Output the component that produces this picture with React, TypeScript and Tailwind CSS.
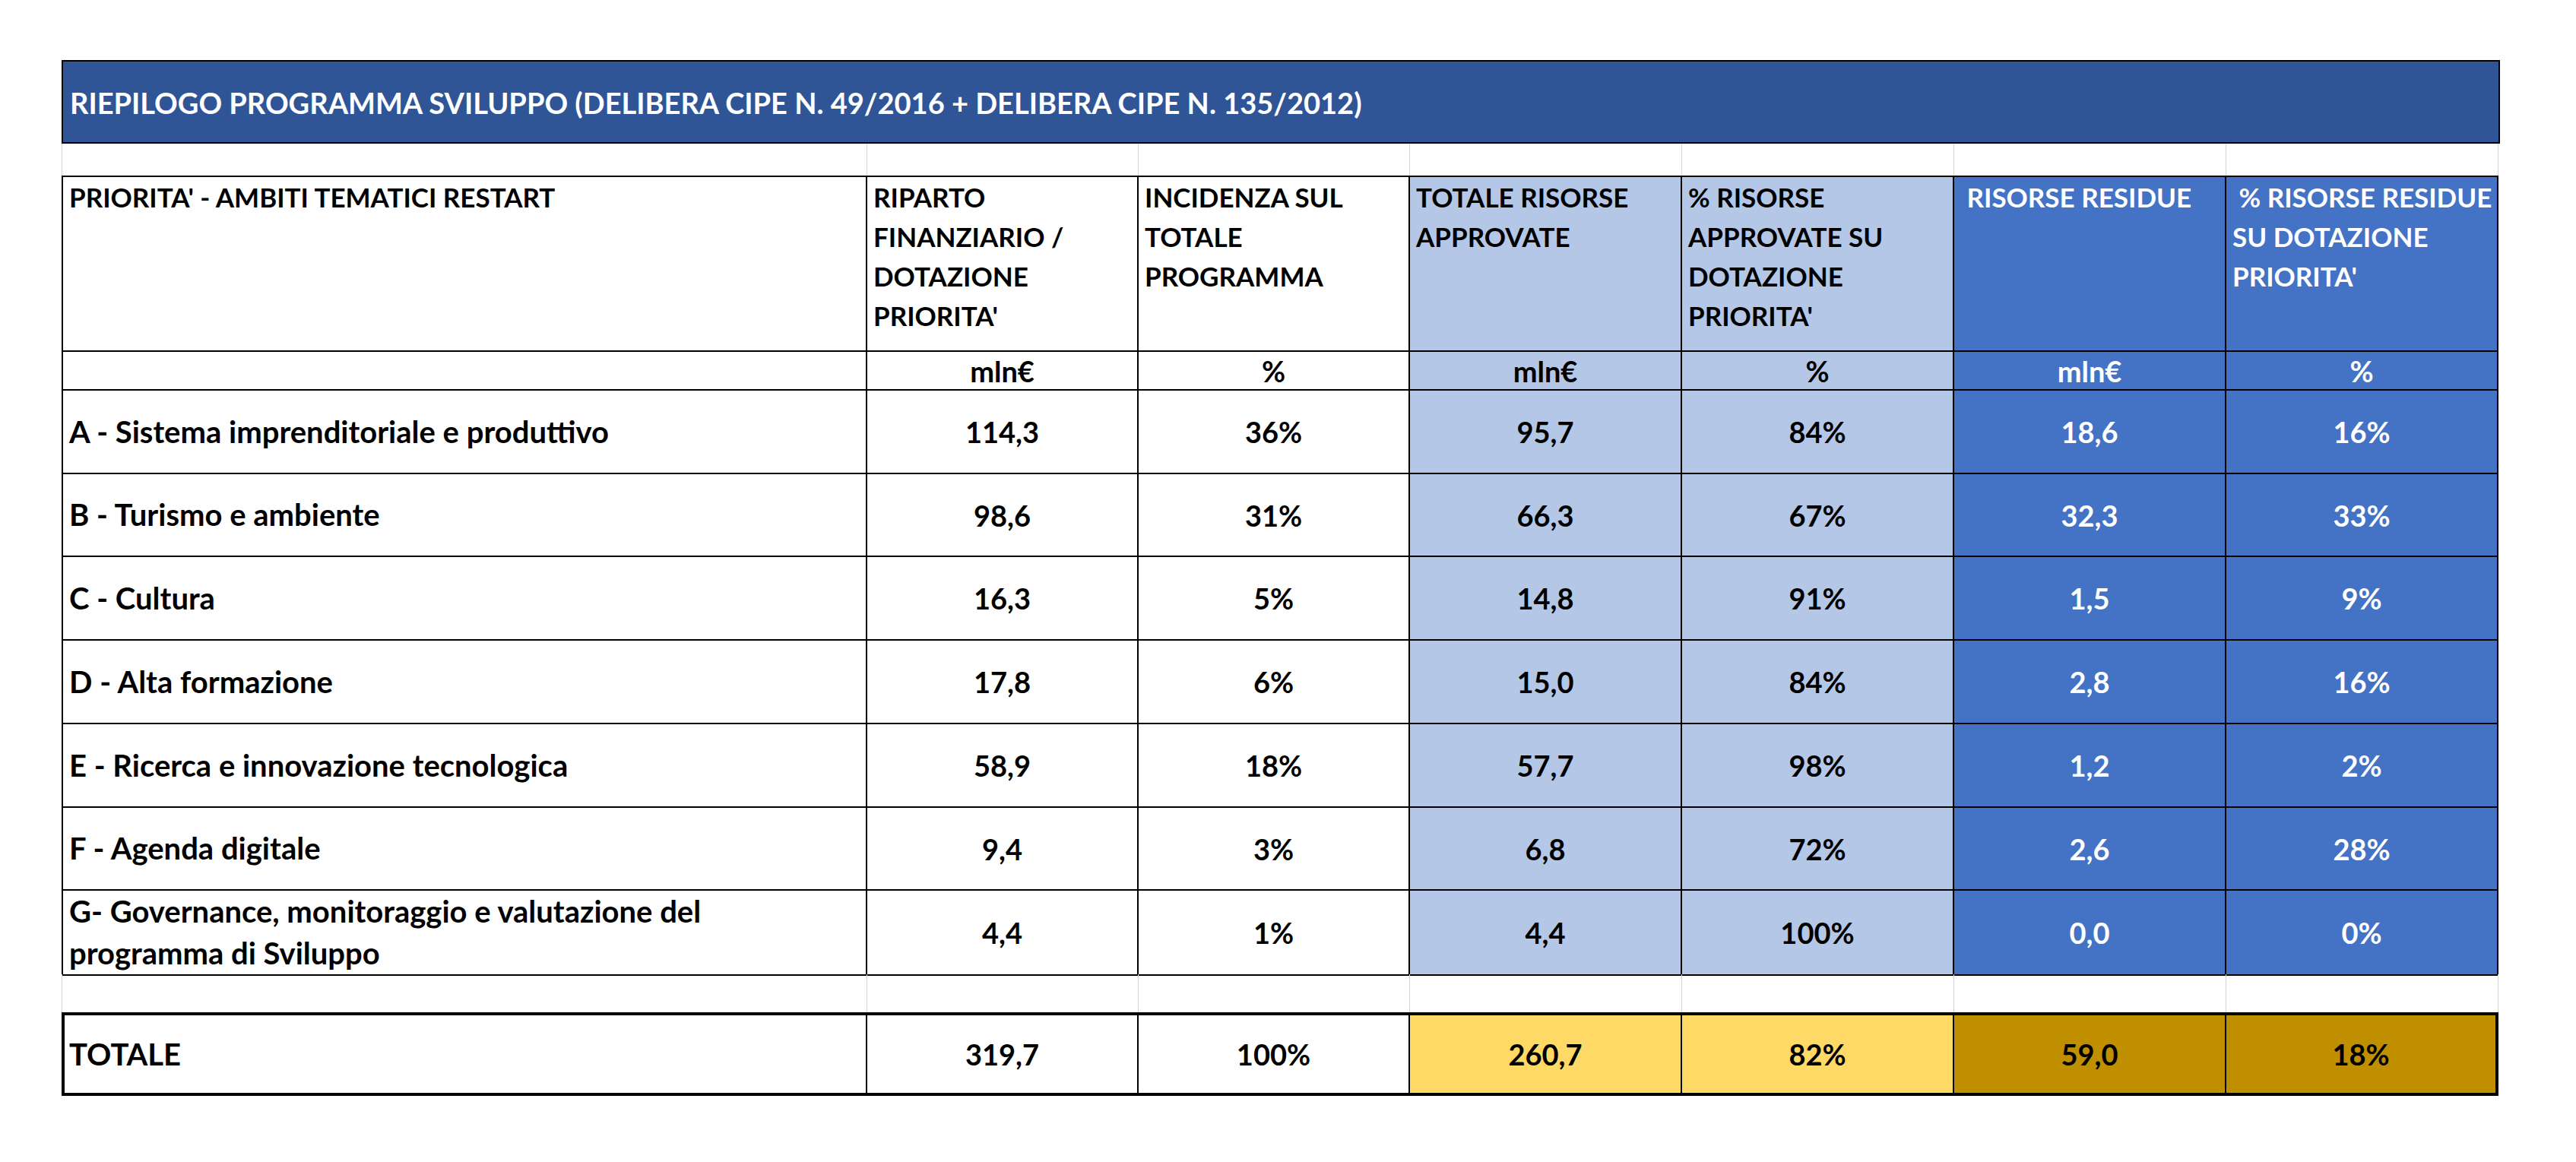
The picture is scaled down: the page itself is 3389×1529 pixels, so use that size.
import React from "react";

const grid = "grid grid-cols-[1060px_357px_357px_358px_358px_358px_358px]";

// per-column cell fill for the header / unit / data rows
const fills = [
  "bg-white text-black",
  "bg-white text-black",
  "bg-white text-black",
  "bg-[#B4C7E7] text-black",
  "bg-[#B4C7E7] text-black",
  "bg-[#4472C4] text-white",
  "bg-[#4472C4] text-white",
];

const totalFills = [
  "bg-white",
  "bg-white",
  "bg-white",
  "bg-[#FFD966]",
  "bg-[#FFD966]",
  "bg-[#BF8F00]",
  "bg-[#BF8F00]",
];

const headers: React.ReactNode[] = [
  <>PRIORITA' - AMBITI TEMATICI RESTART</>,
  <>RIPARTO<br />FINANZIARIO /<br />DOTAZIONE<br />PRIORITA'</>,
  <>INCIDENZA SUL<br />TOTALE<br />PROGRAMMA</>,
  <>TOTALE RISORSE<br />APPROVATE</>,
  <>% RISORSE<br />APPROVATE SU<br />DOTAZIONE<br />PRIORITA'</>,
  <>&nbsp;RISORSE RESIDUE</>,
  <>&nbsp;% RISORSE RESIDUE<br />SU DOTAZIONE<br />PRIORITA'</>,
];

const units = ["", "mln€", "%", "mln€", "%", "mln€", "%"];

const rows = [
  { h: "h-[110px]", cells: ["A - Sistema imprenditoriale e produttivo", "114,3", "36%", "95,7", "84%", "18,6", "16%"] },
  { h: "h-[109px]", cells: ["B - Turismo e ambiente", "98,6", "31%", "66,3", "67%", "32,3", "33%"] },
  { h: "h-[110px]", cells: ["C - Cultura", "16,3", "5%", "14,8", "91%", "1,5", "9%"] },
  { h: "h-[110px]", cells: ["D - Alta formazione", "17,8", "6%", "15,0", "84%", "2,8", "16%"] },
  { h: "h-[110px]", cells: ["E - Ricerca e innovazione tecnologica", "58,9", "18%", "57,7", "98%", "1,2", "2%"] },
  { h: "h-[109px]", cells: ["F - Agenda digitale", "9,4", "3%", "6,8", "72%", "2,6", "28%"] },
  { h: "h-[110px]", cells: ["G- Governance, monitoraggio e valutazione del programma di Sviluppo", "4,4", "1%", "4,4", "100%", "0,0", "0%"] },
];

const totals = ["TOTALE", "319,7", "100%", "260,7", "82%", "59,0", "18%"];

function GapRow({ h }: { h: string }) {
  return (
    <div className={`${grid} ${h}`}>
      {fills.map((_, i) => (
        <div
          key={i}
          className={`border-r border-[#d4d4d4] ${i === 0 ? "border-l" : ""}`}
        />
      ))}
    </div>
  );
}

export default function App() {
  return (
    <div className="min-h-[1529px] w-[3389px] bg-white pl-[81px] pt-[79px] font-[Lato,sans-serif] font-bold">
      {/* title bar */}
      <div className="flex h-[110px] w-[3208px] items-center border-2 border-black bg-[#2F5597] pl-[9px] pt-[2px] text-[38px] leading-none text-white">
        RIEPILOGO PROGRAMMA SVILUPPO (DELIBERA CIPE N. 49/2016 + DELIBERA CIPE N. 135/2012)
      </div>

      <GapRow h="h-[42px]" />

      {/* column headers */}
      <div className={`${grid} h-[232px]`}>
        {headers.map((hd, i) => (
          <div
            key={i}
            className={`${fills[i]} border-y-2 border-r-2 border-black pl-[8px] text-[35px] leading-[52px] whitespace-nowrap ${i === 0 ? "border-l-2" : ""}`}
          >
            {hd}
          </div>
        ))}
      </div>

      {/* units */}
      <div className={`${grid} h-[51px]`}>
        {units.map((u, i) => (
          <div
            key={i}
            className={`${fills[i]} flex items-center justify-center border-b-2 border-r-2 border-black text-[38px] leading-none ${i === 0 ? "border-l-2" : ""}`}
          >
            {u}
          </div>
        ))}
      </div>

      {rows.map((r, ri) => (
        <div key={ri} className={`${grid} ${r.h}`}>
          {r.cells.map((c, i) =>
            i === 0 ? (
              <div
                key={i}
                className="flex items-center border-b-2 border-l-2 border-r-2 border-black bg-white pl-[8px] pr-[40px] text-[40px] leading-[55px] text-black"
              >
                {c}
              </div>
            ) : (
              <div
                key={i}
                className={`${fills[i]} flex items-center justify-center border-b-2 border-r-2 border-black text-[38px] leading-none`}
              >
                {c}
              </div>
            )
          )}
        </div>
      ))}

      <GapRow h="h-[50px]" />

      {/* totals */}
      <div className={`${grid} h-[110px]`}>
        {totals.map((t, i) => (
          <div
            key={i}
            className={`${totalFills[i]} flex items-center border-y-4 border-black text-[38px] leading-none text-black ${
              i === 0 ? "border-l-4 border-r-2 pl-[6px] text-[40px]" : i === 6 ? "justify-center border-r-4" : "justify-center border-r-2"
            }`}
          >
            {t}
          </div>
        ))}
      </div>
    </div>
  );
}
